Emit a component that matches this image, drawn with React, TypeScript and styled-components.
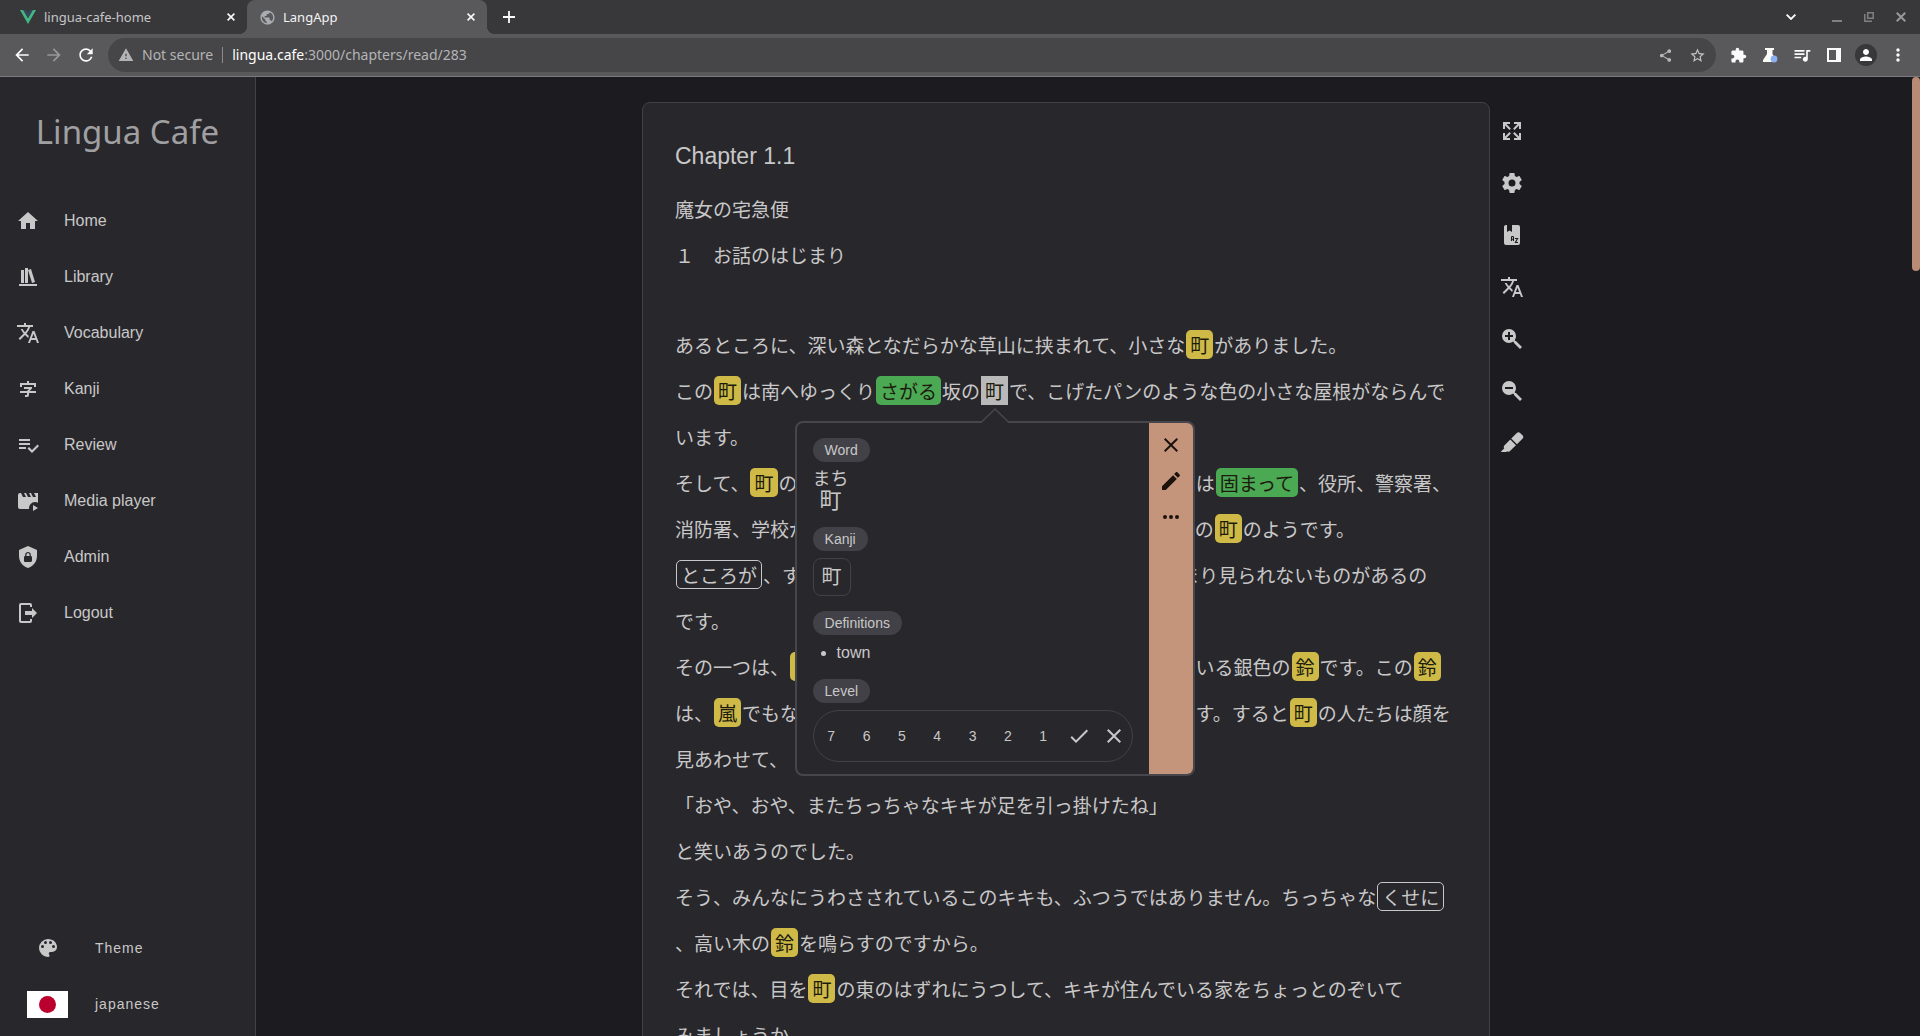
import React, { Fragment, ReactNode } from "react";
import styled, { createGlobalStyle, css } from "styled-components";
import {
  MdArrowBack,
  MdArrowForward,
  MdExtension,
  MdMoreVert,
  MdOutlineStarBorder,
  MdPerson,
  MdPublic,
  MdQueueMusic,
  MdRefresh,
  MdShare,
  MdWarning,
} from "react-icons/md";

const c = {
  background: "#1c1b1f",
  foreground: "#28272c",
  line: "#424147",
  text: "#c8c8c8",
  accent: "#c4957a",
  yellow: "#cfba48",
  green: "#4ba853",
};

const uiFont = `"Liberation Sans", "Noto Sans CJK JP", sans-serif`;
const chromeFont = `"Noto Sans", "Noto Sans CJK JP", sans-serif`;

const GlobalStyle = createGlobalStyle`
  *, *::before, *::after { box-sizing: border-box; }
  body {
    margin: 0;
    background: ${c.background};
    color: ${c.text};
    font-family: ${uiFont};
    font-size: 16px;
    overflow: hidden;
  }
  button {
    border: 0;
    padding: 0;
    background: none;
    color: inherit;
    font: inherit;
    cursor: pointer;
  }
  svg { display: block; flex: none; }
`;

/* ---------- icons ---------- */

const icons = {
  home: "M10,20V14H14V20H19V12H22L12,3L2,12H5V20H10Z",
  bookshelf: "M9 3V18H12V3H9M12 5L16 18L19 17L15 4L12 5M5 5V18H8V5H5M3 19V21H21V19H3Z",
  translate:
    "M12.87,15.07L10.33,12.56L10.36,12.53C12.1,10.59 13.34,8.36 14.07,6H17V4H10V2H8V4H1V6H12.17C11.5,7.92 10.44,9.75 9,11.35C8.07,10.32 7.3,9.19 6.69,8H4.69C5.42,9.63 6.42,11.17 7.67,12.56L2.58,17.58L4,19L9,14L12.11,17.11L12.87,15.07M18.5,10H16.5L12,22H14L15.12,19H19.87L21,22H23L18.5,10M15.88,17L17.5,12.67L19.12,17H15.88Z",
  ideogram:
    "M11 4V6H4V10H6V8H18V10H20V6H13V4H11M8 10V12H13L11 14H4V16H11V18H9V20H11A2 2 0 0 0 13 18V16H20V14H13.6L16 11.6V10H8Z",
  playlistCheck:
    "M14 10H3V12H14V10M14 6H3V8H14V6M3 16H10V14H3V16M21.5 11.5L23 13L16 20L11.5 15.5L13 14L16 17L21.5 11.5Z",
  moviePlay:
    "M18 4L20 8H17L15 4H13L15 8H12L10 4H8L10 8H7L5 4H4A2 2 0 0 0 2 6V18A2 2 0 0 0 4 20H13.1A6 6 0 0 1 19 13A6 6 0 0 1 22 13.8V4H18M17 16V22L22 19L17 16Z",
  shieldLock:
    "M12,1L3,5V11C3,16.55 6.84,21.74 12,23C17.16,21.74 21,16.55 21,11V5L12,1M12,7C13.4,7 14.8,8.1 14.8,9.5V11C15.4,11 16,11.6 16,12.3V15.8C16,16.4 15.4,17 14.7,17H9.2C8.6,17 8,16.4 8,15.7V12.2C8,11.6 8.6,11 9.2,11V9.5C9.2,8.1 10.6,7 12,7M12,8.2C11.2,8.2 10.5,8.7 10.5,9.5V11H13.5V9.5C13.5,8.7 12.8,8.2 12,8.2Z",
  logout:
    "M16,17V14H9V10H16V7L21,12L16,17M14,2A2,2 0 0,1 16,4V6H14V4H5V20H14V18H16V20A2,2 0 0,1 14,22H5A2,2 0 0,1 3,20V4A2,2 0 0,1 5,2H14Z",
  palette:
    "M17.5,12A1.5,1.5 0 0,1 16,10.5A1.5,1.5 0 0,1 17.5,9A1.5,1.5 0 0,1 19,10.5A1.5,1.5 0 0,1 17.5,12M14.5,8A1.5,1.5 0 0,1 13,6.5A1.5,1.5 0 0,1 14.5,5A1.5,1.5 0 0,1 16,6.5A1.5,1.5 0 0,1 14.5,8M9.5,8A1.5,1.5 0 0,1 8,6.5A1.5,1.5 0 0,1 9.5,5A1.5,1.5 0 0,1 11,6.5A1.5,1.5 0 0,1 9.5,8M6.5,12A1.5,1.5 0 0,1 5,10.5A1.5,1.5 0 0,1 6.5,9A1.5,1.5 0 0,1 8,10.5A1.5,1.5 0 0,1 6.5,12M12,3A9,9 0 0,0 3,12A9,9 0 0,0 12,21A1.5,1.5 0 0,0 13.5,19.5C13.5,19.11 13.35,18.76 13.11,18.5C12.88,18.23 12.73,17.88 12.73,17.5A1.5,1.5 0 0,1 14.23,16H16A5,5 0 0,0 21,11C21,6.58 16.97,3 12,3Z",
  expandAll:
    "M9.5,13.09L10.91,14.5L6.41,19H10V21H3V14H5V17.59L9.5,13.09M10.91,9.5L9.5,10.91L5,6.41V10H3V3H10V5H6.41L10.91,9.5M14.5,13.09L19,17.59V14H21V21H14V19H17.59L13.09,14.5L14.5,13.09M13.09,9.5L17.59,5H14V3H21V10H19V6.41L14.5,10.91L13.09,9.5Z",
  cog: "M12,15.5A3.5,3.5 0 0,1 8.5,12A3.5,3.5 0 0,1 12,8.5A3.5,3.5 0 0,1 15.5,12A3.5,3.5 0 0,1 12,15.5M19.43,12.97C19.47,12.65 19.5,12.33 19.5,12C19.5,11.67 19.47,11.34 19.43,11L21.54,9.37C21.73,9.22 21.78,8.95 21.66,8.73L19.66,5.27C19.54,5.05 19.27,4.96 19.05,5.05L16.56,6.05C16.04,5.66 15.5,5.32 14.87,5.07L14.5,2.42C14.46,2.18 14.25,2 14,2H10C9.75,2 9.54,2.18 9.5,2.42L9.13,5.07C8.5,5.32 7.96,5.66 7.44,6.05L4.95,5.05C4.73,4.96 4.46,5.05 4.34,5.27L2.34,8.73C2.21,8.95 2.27,9.22 2.46,9.37L4.57,11C4.53,11.34 4.5,11.67 4.5,12C4.5,12.33 4.53,12.65 4.57,12.97L2.46,14.63C2.27,14.78 2.21,15.05 2.34,15.27L4.34,18.73C4.46,18.95 4.73,19.03 4.95,18.95L7.44,17.94C7.96,18.34 8.5,18.68 9.13,18.93L9.5,21.58C9.54,21.82 9.75,22 10,22H14C14.25,22 14.46,21.82 14.5,21.58L14.87,18.93C15.5,18.67 16.04,18.34 16.56,17.94L19.05,18.95C19.27,19.03 19.54,18.95 19.66,18.73L21.66,15.27C21.78,15.05 21.73,14.78 21.54,14.63L19.43,12.97Z",
  magnifyPlus:
    "M9,2A7,7 0 0,1 16,9C16,10.57 15.5,12 14.61,13.19L15.41,14H16L22,20L20,22L14,16V15.41L13.19,14.61C12,15.5 10.57,16 9,16A7,7 0 0,1 2,9A7,7 0 0,1 9,2M8,5V8H5V10H8V13H10V10H13V8H10V5H8Z",
  magnifyMinus:
    "M9,2A7,7 0 0,1 16,9C16,10.57 15.5,12 14.61,13.19L15.41,14H16L22,20L20,22L14,16V15.41L13.19,14.61C12,15.5 10.57,16 9,16A7,7 0 0,1 2,9A7,7 0 0,1 9,2M5,8V10H13V8H5Z",
  marker:
    "M18.5,1.15C17.97,1.15 17.46,1.34 17.07,1.73L11.26,7.55L16.91,13.2L22.73,7.39C23.5,6.61 23.5,5.35 22.73,4.56L19.89,1.73C19.5,1.34 19,1.15 18.5,1.15M10.3,8.5L4.34,14.46C3.56,15.24 3.56,16.5 4.36,17.31C3.14,18.54 1.9,19.77 0.67,21H6.33L7.19,20.14C7.97,20.9 9.22,20.89 10,20.12L15.95,14.16L10.3,8.5Z",
  pencil:
    "M20.71,7.04C21.1,6.65 21.1,6 20.71,5.63L18.37,3.29C18,2.9 17.35,2.9 16.96,3.29L15.12,5.12L18.87,8.87M3,17.25V21H6.75L17.81,9.93L14.06,6.18L3,17.25Z",
  close:
    "M19,6.41L17.59,5L12,10.59L6.41,5L5,6.41L10.59,12L5,17.59L6.41,19L12,13.41L17.59,19L19,17.59L13.41,12L19,6.41Z",
  dots: "M16,12A2,2 0 0,1 18,10A2,2 0 0,1 20,12A2,2 0 0,1 18,14A2,2 0 0,1 16,12M10,12A2,2 0 0,1 12,10A2,2 0 0,1 14,12A2,2 0 0,1 12,14A2,2 0 0,1 10,12M4,12A2,2 0 0,1 6,10A2,2 0 0,1 8,12A2,2 0 0,1 6,14A2,2 0 0,1 4,12Z",
  check: "M21,7L9,19L3.5,13.5L4.91,12.09L9,16.17L19.59,5.59L21,7Z",
};

const Icon = ({ path }: { path: string }) => (
  <svg width="24" height="24" viewBox="0 0 24 24" fill="currentColor" aria-hidden="true">
    <path d={path} />
  </svg>
);

const DictionaryIcon = () => (
  <svg width="24" height="24" viewBox="0 0 24 24" aria-hidden="true">
    <path
      fill="currentColor"
      d="M7 2V9L9.5 7.5L12 9V2H18A2 2 0 0 1 20 4V20A2 2 0 0 1 18 22H6A2 2 0 0 1 4 20V4C4 2.9 4.9 2 6 2H7Z"
    />
    <path
      fill="none"
      stroke={c.background}
      strokeWidth="1.1"
      d="M11.5 18V14.2Q11.5 13.5 12.2 13.5H12.8Q13.5 13.5 13.5 14.2V18M11.5 16.2H13.5M15 15.5H17.6L15.4 19.5H18"
    />
  </svg>
);

const VueLogo = () => (
  <svg width="16" height="14" viewBox="0 0 16 14" aria-hidden="true">
    <path fill="#41b883" d="M0 0H3.2L8 8.3L12.8 0H16L8 14Z" />
    <path fill="#35495e" d="M3.2 0H6.1L8 3.3L9.9 0H12.8L8 8.3Z" />
  </svg>
);

const Cross = ({ size }: { size: number }) => (
  <svg width={size} height={size} viewBox="0 0 8 8" stroke="currentColor" strokeWidth="1.6" aria-hidden="true">
    <path d="M.6.6L7.4 7.4M7.4.6L.6 7.4" />
  </svg>
);

/* ---------- browser frame ---------- */

const Page = styled.div`
  display: flex;
  flex-direction: column;
  height: 100vh;
`;

const Browser = styled.header`
  flex: none;
  font-family: ${chromeFont};
  border-bottom: 1px solid #7b7b7f;
  background: #59595b;
`;

const TabStrip = styled.div`
  display: flex;
  align-items: stretch;
  height: 34px;
  padding-right: 3px;
  background: #38383a;
`;

const Tab = styled.div<{ $active?: boolean }>`
  position: relative;
  display: flex;
  align-items: center;
  gap: 8px;
  width: ${(p) => (p.$active ? 240 : 247)}px;
  padding: 0 12px 0 ${(p) => (p.$active ? 12 : 20)}px;
  font-size: 13px;
  line-height: 20px;
  color: #c6c6c8;
  ${(p) =>
    p.$active &&
    css`
      background: #59595b;
      border-radius: 8px 8px 0 0;
      color: #f4f4f4;
      &::before,
      &::after {
        content: "";
        position: absolute;
        bottom: 0;
        width: 8px;
        height: 8px;
      }
      &::before {
        left: -8px;
        background: radial-gradient(circle at 0 0, transparent 8px, #59595b 8px);
      }
      &::after {
        right: -8px;
        background: radial-gradient(circle at 100% 0, transparent 8px, #59595b 8px);
      }
    `}
`;

const Favicon = styled.span`
  display: flex;
  flex: none;
  justify-content: center;
  width: 16px;
  color: #a9acb0;
`;

const TabTitle = styled.span`
  flex: 1;
  white-space: nowrap;
`;

const ChromeButton = styled.button<{ $dim?: boolean; $w?: number }>`
  display: flex;
  flex: none;
  align-items: center;
  align-self: center;
  justify-content: center;
  width: ${(p) => p.$w ?? 32}px;
  height: 32px;
  color: ${(p) => (p.$dim ? "#98989a" : "#fbfbfb")};
`;

const WindowControls = styled.div`
  display: flex;
  align-items: center;
  gap: 14px;
  margin-left: auto;
`;

const ControlGroup = styled.div`
  display: flex;
  align-items: center;
`;

const Toolbar = styled.div`
  display: flex;
  align-items: center;
  height: 42px;
  padding: 0 6px;
`;

const Omnibox = styled.div`
  display: flex;
  flex: 1;
  align-items: center;
  height: 34px;
  margin: 0 6px;
  padding: 0 3px 0 10px;
  border-radius: 17px;
  background: #464648;
  color: #b4b4b6;
  font-size: 14px;
  line-height: 20px;
`;

const Security = styled.span`
  display: flex;
  align-items: center;
  gap: 8px;
  margin-right: 9px;
  padding-right: 9px;
  border-right: 1px solid #8a8a8c;
  line-height: 16px;
  white-space: nowrap;
`;

const Address = styled.div`
  flex: 1;
  strong {
    font-weight: 400;
    color: #ffffff;
  }
`;

const Avatar = styled.span`
  display: flex;
  align-items: center;
  justify-content: center;
  width: 22px;
  height: 22px;
  border-radius: 50%;
  background: #38383a;
`;

/* ---------- app frame ---------- */

const Body = styled.div`
  display: flex;
  flex: 1;
  min-height: 0;
`;

const Sidebar = styled.aside`
  display: flex;
  flex: none;
  flex-direction: column;
  width: 256px;
  border-right: 1px solid ${c.line};
  background: ${c.foreground};
`;

const Logo = styled.div`
  padding: 31px 0 37px;
  font-family: ${chromeFont};
  font-size: 33px;
  line-height: 48px;
  text-align: center;
  color: #a0a0a2;
`;

const Nav = styled.nav`
  display: flex;
  flex: 1;
  flex-direction: column;
`;

const NavLink = styled.a`
  display: flex;
  align-items: center;
  gap: 24px;
  height: 56px;
  padding: 0 16px;
  color: inherit;
  text-decoration: none;
`;

const SidebarFooter = styled.div`
  display: flex;
  flex-direction: column;
  padding: 0 27px 4px;
`;

const FooterButton = styled.button`
  display: flex;
  align-items: center;
  gap: 27px;
  height: 56px;
  font-size: 14px;
  letter-spacing: 1px;
`;

const FooterIcon = styled.span`
  display: flex;
  justify-content: center;
  width: 41px;
`;

const Flag = styled.span`
  display: flex;
  align-items: center;
  justify-content: center;
  width: 41px;
  height: 27px;
  background: #ffffff;
  &::before {
    content: "";
    width: 17px;
    height: 17px;
    border-radius: 50%;
    background: #bc002d;
  }
`;

const Main = styled.main`
  display: flex;
  flex: 1;
  align-items: flex-start;
  justify-content: center;
  min-width: 0;
  padding: 25px 0 0 8px;
  overflow: hidden;
`;

const ScrollTrack = styled.div`
  flex: none;
  width: 8px;
`;

const ScrollThumb = styled.div`
  height: 194px;
  border-radius: 4px;
  background: #b78b76;
`;

/* ---------- reader ---------- */

const Reader = styled.article`
  flex: 0 1 848px;
  padding: 32px;
  border: 1px solid ${c.line};
  border-radius: 8px;
  background: ${c.foreground};
`;

const ChapterTitle = styled.h1`
  margin: 0 0 9px;
  font-size: 23px;
  font-weight: 400;
  line-height: 42px;
`;

const Paragraph = styled.p`
  min-height: 44px;
  margin: 0;
  font-family: "Noto Sans CJK JP", sans-serif;
  font-size: 19px;
  line-height: 46px;
  white-space: nowrap;
`;

type Kind = "yellow" | "green" | "outline" | "selected";

const Word = styled.span<{ $kind: Kind }>`
  display: inline-block;
  height: 29px;
  margin: 0 1px;
  padding: 0 4px;
  border-radius: 5px;
  line-height: 29px;
  color: #1c1b0e;
  ${(p) => p.$kind === "yellow" && `background: ${c.yellow};`}
  ${(p) => p.$kind === "green" && `background: ${c.green};`}
  ${(p) => p.$kind === "selected" && "position: relative; border-radius: 0; background: #b9b9b9;"}
  ${(p) => p.$kind === "outline" && `border: 1px solid ${c.text}; color: inherit; line-height: 27px;`}
`;

const Tools = styled.div`
  display: flex;
  flex: none;
  flex-direction: column;
  gap: 8px;
  width: 44px;
  padding-top: 7px;
`;

const ToolButton = styled.button`
  display: flex;
  align-items: center;
  justify-content: center;
  height: 44px;
`;

/* ---------- vocabulary popup ---------- */

const Popup = styled.section`
  position: absolute;
  z-index: 1;
  top: 45px;
  left: 50%;
  display: flex;
  width: 400px;
  margin-left: -200px;
  border: 2px solid #47464c;
  border-radius: 8px;
  background: ${c.foreground};
  color: ${c.text};
  font-family: ${uiFont};
  font-size: 14px;
`;

const PopupArrow = styled.svg`
  position: absolute;
  top: -15px;
  left: 184px;
`;

const PopupBody = styled.div`
  display: flex;
  flex: 1;
  flex-direction: column;
  gap: 15px;
  padding: 15px 16px 12px;
`;

const PopupSection = styled.div`
  display: flex;
  flex-direction: column;
  align-items: flex-start;
  gap: 7px;
`;

const Chip = styled.h2`
  margin: 0;
  padding: 0 12px;
  border-radius: 12px;
  background: ${c.line};
  font-size: 14px;
  font-weight: 400;
  line-height: 24px;
`;

const Reading = styled.div`
  display: flex;
  flex-direction: column;
  align-items: center;
  font-size: 22px;
  line-height: 22px;
  span {
    font-size: 18px;
    line-height: 21px;
  }
`;

const KanjiBox = styled.button`
  width: 38px;
  height: 38px;
  border: 1px solid ${c.line};
  border-radius: 8px;
  font-size: 20px;
  line-height: 36px;
`;

const Definitions = styled.ul`
  margin: 0;
  padding-left: 24px;
  font-size: 16px;
  line-height: 22px;
`;

const Levels = styled.div`
  display: flex;
  align-self: stretch;
  height: 52px;
  border: 1px solid ${c.line};
  border-radius: 26px;
`;

const LevelButton = styled.button`
  display: flex;
  flex: 1;
  align-items: center;
  justify-content: center;
  min-width: 0;
`;

const PopupActions = styled.div`
  display: flex;
  flex: none;
  flex-direction: column;
  width: 44px;
  padding-top: 4px;
  border-radius: 0 6px 6px 0;
  background: ${c.accent};
  color: #1c120d;
`;

const ActionButton = styled.button`
  display: flex;
  align-items: center;
  justify-content: center;
  height: 36px;
`;

const VocabularyPopup = () => (
  <Popup aria-label="Vocabulary">
    <PopupArrow width="28" height="16" viewBox="0 0 28 16" aria-hidden="true">
      <path d="M0 15L14 1L28 15V16H0Z" fill={c.foreground} />
      <path d="M0 14.5L14 1L28 14.5" fill="none" stroke="#47464c" strokeWidth="1.6" />
    </PopupArrow>
    <PopupBody>
      <PopupSection>
        <Chip>Word</Chip>
        <Reading>
          <span>まち</span>町
        </Reading>
      </PopupSection>
      <PopupSection>
        <Chip>Kanji</Chip>
        <KanjiBox>町</KanjiBox>
      </PopupSection>
      <PopupSection>
        <Chip>Definitions</Chip>
        <Definitions>
          <li>town</li>
        </Definitions>
      </PopupSection>
      <PopupSection>
        <Chip>Level</Chip>
        <Levels>
          {[7, 6, 5, 4, 3, 2, 1].map((level) => (
            <LevelButton key={level}>{level}</LevelButton>
          ))}
          <LevelButton aria-label="Learned">
            <Icon path={icons.check} />
          </LevelButton>
          <LevelButton aria-label="Ignore">
            <Icon path={icons.close} />
          </LevelButton>
        </Levels>
      </PopupSection>
    </PopupBody>
    <PopupActions>
      <ActionButton aria-label="Close">
        <Icon path={icons.close} />
      </ActionButton>
      <ActionButton aria-label="Edit">
        <Icon path={icons.pencil} />
      </ActionButton>
      <ActionButton aria-label="More">
        <Icon path={icons.dots} />
      </ActionButton>
    </PopupActions>
  </Popup>
);

/* ---------- chapter text ---------- */

const Y = ({ children }: { children: ReactNode }) => <Word $kind="yellow">{children}</Word>;
const G = ({ children }: { children: ReactNode }) => <Word $kind="green">{children}</Word>;
const O = ({ children }: { children: ReactNode }) => <Word $kind="outline">{children}</Word>;

const paragraphs: ReactNode[][] = [
  ["魔女の宅急便"],
  ["１　お話のはじまり"],
  [],
  [<>あるところに、深い森となだらかな草山に挟まれて、小さな<Y>町</Y>がありました。</>],
  [
    <>
      この<Y>町</Y>は南へゆっくり<G>さがる</G>坂の
      <Word $kind="selected">
        町<VocabularyPopup />
      </Word>
      で、こげたパンのような色の小さな屋根がならんで
    </>,
    "います。",
  ],
  [
    <>そして、<Y>町</Y>のまん中には古い駅があり、そのうしろのほうには<G>固まって</G>、役所、警察署、</>,
    <>消防署、学校があつまって、どこにでも<Y>ある</Y>ような、ふつうの<Y>町</Y>のようです。</>,
  ],
  [<><O>ところが</O>、すこし気をつけて見ると、よその国々では、あまり見られないものがあるの</>, "です。"],
  [
    <>その一つは、<Y>町</Y>の中のいちばん高い木のてっぺんにさがっている銀色の<Y>鈴</Y>です。この<Y>鈴</Y></>,
    <>は、<Y>嵐</Y>でもないのに、ときどき、大きな音で鳴りだすものです。すると<Y>町</Y>の人たちは顔を</>,
    "見あわせて、",
  ],
  ["「おや、おや、またちっちゃなキキが足を引っ掛けたね」"],
  ["と笑いあうのでした。"],
  [
    <>そう、みんなにうわさされているこのキキも、ふつうではありません。ちっちゃな<O>くせに</O></>,
    <>、高い木の<Y>鈴</Y>を鳴らすのですから。</>,
  ],
  [<>それでは、目を<Y>町</Y>の東のはずれにうつして、キキが住んでいる家をちょっとのぞいて</>, "みましょうか。"],
];

const navigation: [string, string][] = [
  ["Home", icons.home],
  ["Library", icons.bookshelf],
  ["Vocabulary", icons.translate],
  ["Kanji", icons.ideogram],
  ["Review", icons.playlistCheck],
  ["Media player", icons.moviePlay],
  ["Admin", icons.shieldLock],
  ["Logout", icons.logout],
];

const tools: [string, ReactNode][] = [
  ["Fullscreen", <Icon path={icons.expandAll} />],
  ["Settings", <Icon path={icons.cog} />],
  ["Glossary", <DictionaryIcon />],
  ["Translate", <Icon path={icons.translate} />],
  ["Zoom in", <Icon path={icons.magnifyPlus} />],
  ["Zoom out", <Icon path={icons.magnifyMinus} />],
  ["Highlight", <Icon path={icons.marker} />],
];

const BrowserFrame = () => (
  <Browser>
    <TabStrip>
      <Tab>
        <Favicon>
          <VueLogo />
        </Favicon>
        <TabTitle>lingua-cafe-home</TabTitle>
        <ChromeButton $w={8} aria-label="Close tab">
          <Cross size={8} />
        </ChromeButton>
      </Tab>
      <Tab $active>
        <Favicon>
          <MdPublic size={17} />
        </Favicon>
        <TabTitle>LangApp</TabTitle>
        <ChromeButton $w={8} aria-label="Close tab">
          <Cross size={8} />
        </ChromeButton>
      </Tab>
      <ChromeButton $w={44} aria-label="New tab">
        <svg width="12" height="12" viewBox="0 0 12 12" stroke="currentColor" strokeWidth="1.8">
          <path d="M6 0V12M0 6H12" />
        </svg>
      </ChromeButton>
      <WindowControls>
        <ChromeButton aria-label="Search tabs">
          <svg width="10" height="6" viewBox="0 0 10 6" fill="none" stroke="currentColor" strokeWidth="1.8">
            <path d="M.6.6L5 5L9.4.6" />
          </svg>
        </ChromeButton>
        <ControlGroup>
          <ChromeButton $dim aria-label="Minimize">
            <svg width="10" height="10" viewBox="0 0 10 10" fill="#808082">
              <path d="M0 8H10V10H0Z" />
            </svg>
          </ChromeButton>
          <ChromeButton $dim aria-label="Restore">
            <svg width="10" height="10" viewBox="0 0 10 10" fill="none" stroke="#808082" strokeWidth="1.5">
              <path d="M3.7.8H9.2V6.3H3.7ZM.8 2V9.2H8" />
            </svg>
          </ChromeButton>
          <ChromeButton $dim aria-label="Close window">
            <Cross size={10} />
          </ChromeButton>
        </ControlGroup>
      </WindowControls>
    </TabStrip>
    <Toolbar>
      <ChromeButton aria-label="Back">
        <MdArrowBack size={20} />
      </ChromeButton>
      <ChromeButton $dim aria-label="Forward">
        <MdArrowForward size={20} />
      </ChromeButton>
      <ChromeButton aria-label="Reload">
        <MdRefresh size={20} />
      </ChromeButton>
      <Omnibox>
        <Security>
          <MdWarning size={16} />
          Not secure
        </Security>
        <Address role="textbox" aria-label="Address">
          <strong>lingua.cafe</strong>:3000/chapters/read/283
        </Address>
        <ChromeButton $dim aria-label="Share">
          <MdShare size={15} color="#b8b8ba" />
        </ChromeButton>
        <ChromeButton $dim aria-label="Bookmark">
          <MdOutlineStarBorder size={17} color="#c4c4c6" />
        </ChromeButton>
      </Omnibox>
      <ChromeButton aria-label="Extensions">
        <MdExtension size={17} />
      </ChromeButton>
      <ChromeButton aria-label="Labs">
        <svg width="16" height="16" viewBox="0 0 16 16">
          <path fill="currentColor" d="M3 1H12V3H10.500V7L14 13V15H1V13L5 7V3H3Z" />
          <circle cx="12" cy="12" r="3.400" fill="#8ab0f2" />
        </svg>
      </ChromeButton>
      <ChromeButton aria-label="Media controls">
        <MdQueueMusic size={20} />
      </ChromeButton>
      <ChromeButton aria-label="Side panel">
        <svg width="14" height="14" viewBox="0 0 14 14" fill="currentColor">
          <path fillRule="evenodd" d="M0 0H14V14H0ZM2 2V12H9V2Z" />
        </svg>
      </ChromeButton>
      <ChromeButton aria-label="Profile">
        <Avatar>
          <MdPerson size={18} />
        </Avatar>
      </ChromeButton>
      <ChromeButton aria-label="Menu">
        <MdMoreVert size={20} />
      </ChromeButton>
    </Toolbar>
  </Browser>
);

const App = () => (
  <Page>
    <GlobalStyle />
    <BrowserFrame />
    <Body>
      <Sidebar>
        <Logo>Lingua Cafe</Logo>
        <Nav>
          {navigation.map(([label, path]) => (
            <NavLink key={label} href={`#${label}`}>
              <Icon path={path} />
              {label}
            </NavLink>
          ))}
        </Nav>
        <SidebarFooter>
          <FooterButton>
            <FooterIcon>
              <Icon path={icons.palette} />
            </FooterIcon>
            Theme
          </FooterButton>
          <FooterButton>
            <Flag />
            japanese
          </FooterButton>
        </SidebarFooter>
      </Sidebar>
      <Main>
        <Reader lang="ja">
          <ChapterTitle>Chapter 1.1</ChapterTitle>
          {paragraphs.map((lines, p) => (
            <Paragraph key={p}>
              {lines.map((line, i) => (
                <Fragment key={i}>
                  {i > 0 && <br />}
                  {line}
                </Fragment>
              ))}
            </Paragraph>
          ))}
        </Reader>
        <Tools>
          {tools.map(([label, icon]) => (
            <ToolButton key={label} aria-label={label}>
              {icon}
            </ToolButton>
          ))}
        </Tools>
      </Main>
      <ScrollTrack>
        <ScrollThumb />
      </ScrollTrack>
    </Body>
  </Page>
);

export default App;
